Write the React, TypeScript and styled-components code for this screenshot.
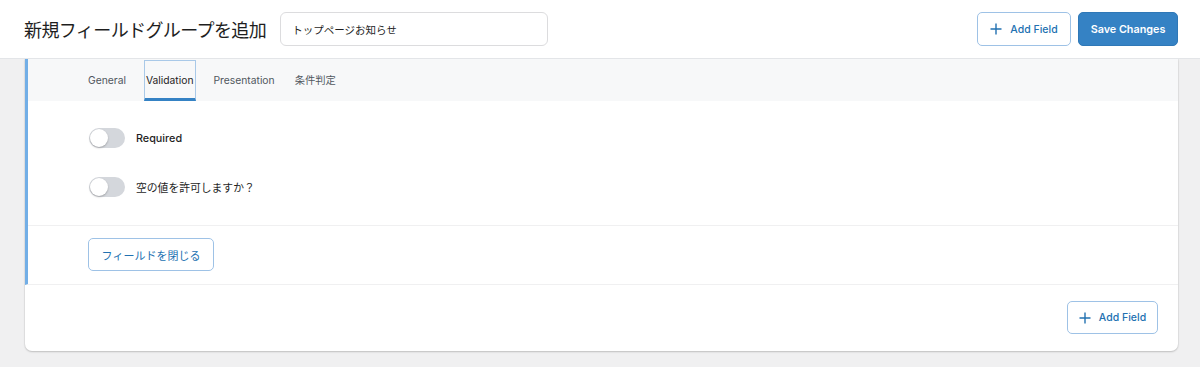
import React, { useState } from "react";
import styled, { createGlobalStyle } from "styled-components";

const Global = createGlobalStyle`
  html, body { margin: 0; padding: 0; }
  body {
    background: #f0f0f1;
    font-family: Inter, "Noto Sans", "Noto Sans CJK JP", sans-serif;
    color: #1e1e1e;
    -webkit-font-smoothing: antialiased;
  }
  * { box-sizing: border-box; }
`;

const Header = styled.header`
  height: 59px;
  background: #fff;
  border-bottom: 1px solid #e3e5e8;
  display: flex;
  align-items: center;
  padding: 0 22px 0 24px;
  position: relative;
  z-index: 2;
`;

const Title = styled.h1`
  margin: 0;
  font-size: 18px;
  font-weight: 400;
  color: #1e1e1e;
  font-family: "Noto Sans CJK JP", sans-serif;
  letter-spacing: -0.6px;
`;

const TitleInput = styled.input`
  margin-left: 14px;
  width: 268px;
  height: 34px;
  border: 1px solid #dcdcde;
  border-radius: 6px;
  padding: 0 11px;
  font-size: 10.5px;
  font-family: "Noto Sans CJK JP", sans-serif;
  color: #1e1e1e;
  outline: none;
`;

const Actions = styled.div`
  margin-left: auto;
  display: flex;
  gap: 7px;
`;

const OutlineButton = styled.button<{ $w: number; $h: number; $jp?: boolean }>`
  width: ${(p) => p.$w}px;
  height: ${(p) => p.$h}px;
  display: inline-flex;
  align-items: center;
  justify-content: center;
  gap: 8px;
  background: #fff;
  border: 1px solid #9ec2e6;
  border-radius: 5px;
  color: #2271b1;
  font-family: Inter, "Noto Sans CJK JP", sans-serif;
  font-size: ${(p) => (p.$jp ? "11px" : "10.5px")};
  font-weight: ${(p) => (p.$jp ? 400 : 500)};
  padding: 0;
  cursor: pointer;
`;

const PrimaryButton = styled.button`
  width: 100px;
  height: 34px;
  background: #3582c4;
  border: 1px solid #2f78b7;
  border-radius: 5px;
  color: #fff;
  font-family: Inter, sans-serif;
  font-size: 10.8px;
  font-weight: 600;
  cursor: pointer;
`;

const Main = styled.main`
  padding: 0 22px 15px 25px;
`;

const Card = styled.div`
  background: #fff;
  border-radius: 0 0 7px 7px;
  box-shadow: 0 1px 2px rgba(0, 0, 0, 0.18), 0 0 0 1px rgba(0, 0, 0, 0.03);
  overflow: hidden;
`;

const FieldSection = styled.section`
  border-left: 3px solid #72aee6;
  border-bottom: 1px solid #f0f0f1;
`;

const TabBar = styled.nav`
  height: 42px;
  background: #f7f8f9;
  display: flex;
  align-items: stretch;
  padding-left: 58px;
  gap: 16px;
`;

const Tab = styled.div<{ $active?: boolean }>`
  display: flex;
  align-items: center;
  padding: 0 1px;
  font-size: 10.3px;
  color: ${(p) => (p.$active ? "#1e1e1e" : "#50575e")};
  border: 1px solid ${(p) => (p.$active ? "#a9c9e8" : "transparent")};
  border-bottom: 3px solid ${(p) => (p.$active ? "#3582c4" : "transparent")};
  margin-top: 1px;
  font-family: Inter, "Noto Sans CJK JP", sans-serif;
`;

const Settings = styled.div`
  padding: 27px 0 28px 61px;
  display: flex;
  flex-direction: column;
  gap: 29px;
  border-bottom: 1px solid #f0f0f1;
`;

const ToggleRow = styled.label<{ $jp?: boolean }>`
  display: flex;
  align-items: center;
  gap: 11px;
  font-size: 10.8px;
  font-weight: ${(p) => (p.$jp ? 400 : 500)};
  color: #1e1e1e;
  font-family: Inter, "Noto Sans CJK JP", sans-serif;
`;

const Track = styled.span<{ $on: boolean }>`
  width: 36px;
  height: 20px;
  border-radius: 10px;
  background: ${(p) => (p.$on ? "#3582c4" : "#d4d7dc")};
  display: inline-flex;
  align-items: center;
  padding: 1px;
  justify-content: ${(p) => (p.$on ? "flex-end" : "flex-start")};
  cursor: pointer;
`;

const Knob = styled.span`
  width: 18px;
  height: 18px;
  border-radius: 50%;
  background: #fff;
  box-shadow: 0 1px 2px rgba(0, 0, 0, 0.25);
`;

const CloseRow = styled.div`
  padding: 12px 0 13px 60px;
`;

const Footer = styled.div`
  display: flex;
  justify-content: flex-end;
  padding: 16px 20px 17px;
`;

const PlusIcon = () => (
  <svg width="12" height="12" viewBox="0 0 12 12" aria-hidden>
    <path d="M6 0.5v11M0.5 6h11" stroke="#2271b1" strokeWidth="1.4" fill="none" />
  </svg>
);

const Toggle = ({ label, jp }: { label: string; jp?: boolean }) => {
  const [on, setOn] = useState(false);
  return (
    <ToggleRow $jp={jp} onClick={() => setOn(!on)}>
      <Track $on={on}>
        <Knob />
      </Track>
      {label}
    </ToggleRow>
  );
};

export default function App() {
  return (
    <>
      <Global />
      <Header>
        <Title>新規フィールドグループを追加</Title>
        <TitleInput defaultValue="トップページお知らせ" />
        <Actions>
          <OutlineButton $w={94} $h={34}>
            <PlusIcon />
            Add Field
          </OutlineButton>
          <PrimaryButton>Save Changes</PrimaryButton>
        </Actions>
      </Header>
      <Main>
        <Card>
          <FieldSection>
            <TabBar>
              <Tab>General</Tab>
              <Tab $active>Validation</Tab>
              <Tab>Presentation</Tab>
              <Tab>条件判定</Tab>
            </TabBar>
            <Settings>
              <Toggle label="Required" />
              <Toggle label="空の値を許可しますか？" jp />
            </Settings>
            <CloseRow>
              <OutlineButton $w={126} $h={33} $jp>
                フィールドを閉じる
              </OutlineButton>
            </CloseRow>
          </FieldSection>
          <Footer>
            <OutlineButton $w={91} $h={33}>
              <PlusIcon />
              Add Field
            </OutlineButton>
          </Footer>
        </Card>
      </Main>
    </>
  );
}
